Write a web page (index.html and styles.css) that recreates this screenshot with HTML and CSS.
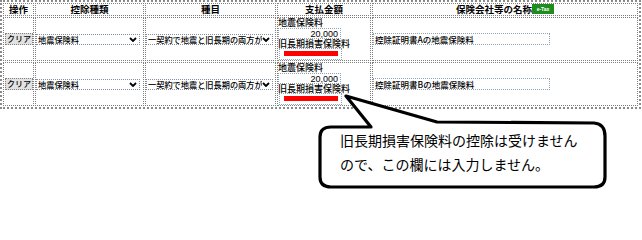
FILE: index.html
```
<!DOCTYPE html>
<html lang="ja">
<head>
<meta charset="utf-8">
<link rel="stylesheet" href="styles.css">
</head>
<body>
<table class="grid">
  <tr class="head">
    <th class="c1">操作</th>
    <th class="c2">控除種類</th>
    <th class="c3">種目</th>
    <th class="c4">支払金額</th>
    <th class="c5">保険会社等の名称<span class="etax">e-Tax</span></th>
  </tr>
  <tr class="row r1">
    <td class="c1"><button class="btn">クリア</button></td>
    <td class="c2"><span class="sel w1"><select><option>地震保険料</option></select><svg class="chev" width="8" height="5" viewBox="0 0 8 5"><path d="M1 1 L4 4 L7 1" fill="none" stroke="#000" stroke-width="1.8"/></svg></span></td>
    <td class="c3"><span class="sel w2"><select><option>一契約で地震と旧長期の両方が</option></select><svg class="chev" width="8" height="5" viewBox="0 0 8 5"><path d="M1 1 L4 4 L7 1" fill="none" stroke="#000" stroke-width="1.8"/></svg></span></td>
    <td class="c4 amt">
      <div class="lbl">地震保険料</div>
      <input class="num" value="20,000">
      <div class="lbl">旧長期損害保険料</div>
      <input class="red" value="">
    </td>
    <td class="c5"><input class="name" value="控除証明書Aの地震保険料"></td>
  </tr>
  <tr class="row r2">
    <td class="c1"><button class="btn">クリア</button></td>
    <td class="c2"><span class="sel w1"><select><option>地震保険料</option></select><svg class="chev" width="8" height="5" viewBox="0 0 8 5"><path d="M1 1 L4 4 L7 1" fill="none" stroke="#000" stroke-width="1.8"/></svg></span></td>
    <td class="c3"><span class="sel w2"><select><option>一契約で地震と旧長期の両方が</option></select><svg class="chev" width="8" height="5" viewBox="0 0 8 5"><path d="M1 1 L4 4 L7 1" fill="none" stroke="#000" stroke-width="1.8"/></svg></span></td>
    <td class="c4 amt">
      <div class="lbl">地震保険料</div>
      <input class="num" value="20,000">
      <div class="lbl">旧長期損害保険料</div>
      <input class="red" value="">
    </td>
    <td class="c5"><input class="name" value="控除証明書Bの地震保険料"></td>
  </tr>
</table>

<svg class="bubble" width="642" height="207" viewBox="0 0 642 207">
  <path d="M346 96 L437 122 L594 123 Q605 124 605 136 L605 177 Q605 187 594 187 L331 187 Q320 187 320 177 L320 137 Q320 127 331 127 L371 127 Z" fill="#fff" stroke="#000" stroke-width="3.2" stroke-linejoin="round"/>
</svg>
<div class="note">旧長期損害保険料の控除は受けません<br>ので、この欄には入力しません。</div>
</body>
</html>
```
FILE: styles.css
```
html, body {
  margin: 0;
  padding: 0;
  background: #fff;
}
body {
  position: relative;
  width: 642px;
  height: 207px;
  overflow: hidden;
  font-family: "Noto Sans CJK JP", "Noto Sans", sans-serif;
  color: #000;
}
.grid {
  border: 2px dotted #8a8a8a;
  border-spacing: 1px;
  table-layout: fixed;
  width: 641px;
}
.grid th, .grid td {
  border: 1px dotted #808080;
  padding: 0;
  box-sizing: border-box;
}
.c1 { width: 31px; }
.c2 { width: 109px; }
.c3 { width: 131px; }
.c4 { width: 94px; }
.c5 { width: 266px; }
.head th {
  height: 13px;
  font-size: 9.5px;
  line-height: 11px;
  font-weight: 700;
  text-align: center;
  white-space: nowrap;
}
.etax {
  display: inline-block;
  vertical-align: top;
  background: #1e8c1e;
  color: #fff;
  font-family: "Liberation Sans", sans-serif;
  font-size: 5px;
  line-height: 10px;
  height: 10px;
  width: 22px;
  text-align: center;
  font-weight: 700;
}
.r1 td { height: 44px; }
.r2 td { height: 43px; }
.row td { vertical-align: middle; }
.row td.amt { vertical-align: top; }
.btn {
  display: block;
  margin: 0 0 0 1px;
  width: 28px;
  height: 12px;
  padding: 0;
  border: 1px dotted #808080;
  background: #e2e2e2;
  font-family: "Noto Sans CJK JP", sans-serif;
  font-size: 8px;
  font-weight: 500;
  line-height: 10px;
  color: #000;
}
.sel {
  display: flex;
  align-items: center;
  height: 11px;
  box-sizing: border-box;
  border: 1px dotted #7f8f9f;
  background: #fff;
  overflow: hidden;
}
.w1 { width: 104px; }
.w2 { width: 127px; }
.sel select {
  appearance: none;
  -webkit-appearance: none;
  border: 0;
  background: transparent;
  flex: 1;
  min-width: 0;
  padding: 0 0 0 1px;
  margin: 0;
  height: 9px;
  font-family: "Noto Sans CJK JP", sans-serif;
  font-size: 8.2px;
  font-weight: 500;
  line-height: 9px;
  color: #000;
  outline: none;
}
.chev {
  flex: none;
  margin: 0 2px 0 0;
}
.lbl {
  font-size: 9px;
  font-weight: 500;
  line-height: 9px;
  height: 9px;
  white-space: nowrap;
}
.lbl:first-child {
  height: 10px;
  line-height: 10px;
}
.num, .red, .name {
  display: block;
  box-sizing: border-box;
  border: 1px dotted #8fa4b8;
  margin: 0;
  font-family: "Noto Sans CJK JP", sans-serif;
  color: #000;
  outline: none;
}
.num {
  width: 63px;
  height: 11px;
  padding: 0 2px 0 0;
  text-align: right;
  font-family: "Liberation Sans", sans-serif;
  font-size: 9px;
  line-height: 9px;
}
.red {
  width: 63px;
  height: 12px;
  margin-left: 1px;
  padding: 2px 3px 3px 4px;
  background-color: #ff0000;
  background-clip: content-box;
}
.name {
  width: 177px;
  height: 12px;
  padding: 0 0 0 1px;
  font-size: 8.5px;
  font-weight: 500;
  line-height: 10px;
}
.bubble {
  position: absolute;
  left: 0;
  top: 0;
  pointer-events: none;
}
.note {
  position: absolute;
  left: 340px;
  top: 128px;
  font-size: 14px;
  line-height: 24px;
  white-space: nowrap;
}
```
